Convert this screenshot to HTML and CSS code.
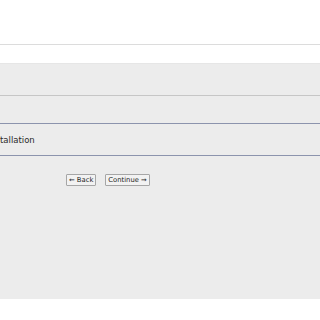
FILE: index.html
```html
<!DOCTYPE html>
<html lang="en">
<head>
  <meta charset="UTF-8" />
  <title>Installation</title>
  <link rel="stylesheet" href="styles.css">
</head>
<body>
  <header class="topbar"></header>
  <div class="subbar"></div>

  <main class="panel">
    <div class="panel-head"></div>
    <div class="panel-gap"></div>
    <div class="step-title">tallation</div>
    <div class="actions">
      <button class="btn">&larr; Back</button>
      <button class="btn">Continue &rarr;</button>
    </div>
  </main>
</body>
</html>
```

FILE: styles.css
```css
body {
  margin: 0;
  font-family: 'DejaVu Sans', sans-serif;
  background: #fff;
  color: #222;
}

.topbar {
  height: 44px;
  border-bottom: 1px solid #dcdcdc;
}

.subbar {
  height: 18px;
}

.panel {
  background: #ececec;
  height: 235px;
  border-top: 1px solid #e6e6e6;
}

.panel-head {
  height: 31px;
  border-bottom: 1px solid #c6c6c6;
}

.panel-gap {
  height: 27px;
  border-bottom: 1px solid #8c94ad;
}

.step-title {
  height: 31px;
  line-height: 33px;
  font-size: 8.5px;
  color: #2a2a2a;
  border-bottom: 1px solid #8c94ad;
}

.actions {
  display: flex;
  gap: 9px;
  padding: 18px 0 0 66px;
}

.btn {
  font-family: 'DejaVu Sans', sans-serif;
  font-size: 6.8px;
  color: #1e1e1e;
  background: #f2f2f2;
  border: 1px solid #a6a6a6;
  border-radius: 1px;
  padding: 0 2px;
  height: 12px;
  line-height: 10px;
}
```
